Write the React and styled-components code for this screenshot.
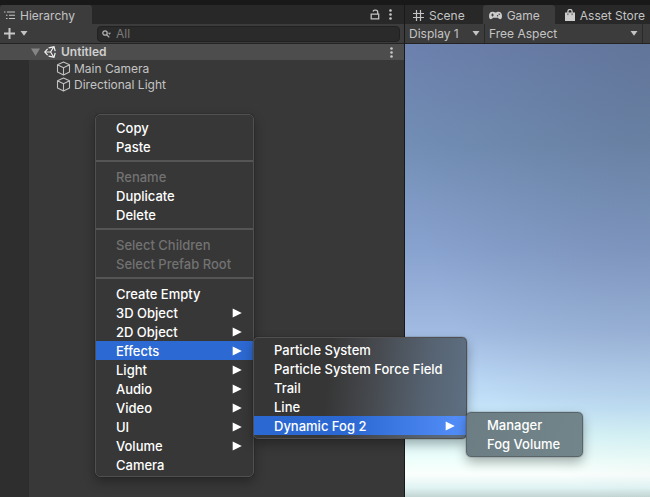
import React from "react";
import styled, { createGlobalStyle, css } from "styled-components";

const Global = createGlobalStyle`
  * { box-sizing: border-box; }
  html, body, #root { height: 100%; }
  body { margin: 0; overflow: hidden; background: #191919; }
  body, button, input, select { font-family: Inter, "Liberation Sans", sans-serif; font-size: 12px; }
  button { border: 0; padding: 0; background: none; color: inherit; }
  ul { list-style: none; margin: 0; padding: 0; }
`;

const Editor = styled.div`
  display: grid;
  grid-template-columns: minmax(0, 404fr) minmax(0, 245fr);
  gap: 1px;
  height: 100%;
  padding-top: 5px;
  background: #191919;
  color: #c4c4c4;
`;

const Panel = styled.section`
  display: flex;
  flex-direction: column;
  min-width: 0;
  background: #383838;
`;

const TabBar = styled.div`
  display: flex;
  align-items: stretch;
  height: 19px;
  background: #282828;
`;

const Tab = styled.button`
  display: flex;
  align-items: center;
  gap: 5px;
  padding: 1px ${(p) => p.$end}px 0 ${(p) => p.$start}px;
  white-space: nowrap;
  border-radius: 3px 3px 0 0;
  background: ${(p) => (p.$active ? "#3c3c3c" : "transparent")};
  svg { flex: none; }
`;

const TabActions = styled.div`
  display: flex;
  align-items: center;
  gap: 9px;
  margin-left: auto;
  padding-right: 12px;
`;

const IconButton = styled.button`
  display: flex;
  align-items: center;
  gap: 5px;
`;

const Toolbar = styled.div`
  display: flex;
  align-items: center;
  height: 20px;
  background: #3c3c3c;
  border-bottom: 1px solid #232323;
`;

const HierarchyTools = styled(Toolbar)`
  gap: 69px;
  padding: 0 4px;
`;

const Search = styled.label`
  display: flex;
  align-items: center;
  gap: 5px;
  flex: 1;
  min-width: 0;
  height: 16px;
  padding-left: 4px;
  border: 1px solid #212121;
  border-radius: 4px;
  background: #2a2a2a;
`;

const SearchInput = styled.input`
  flex: 1;
  min-width: 0;
  padding: 0;
  border: 0;
  outline: 0;
  background: none;
  color: #c4c4c4;
  line-height: 14px;
  &::placeholder { color: #7b7b7b; opacity: 1; }
`;

const SceneRow = styled.div`
  display: flex;
  align-items: center;
  height: 16px;
  padding: 0 11px 0 31px;
  background: #4d4d4d;
  font-weight: 600;
  color: #d0d0d0;
`;

const SceneName = styled.span`
  flex: 1;
  margin-left: 5px;
  line-height: 16px;
`;

const SceneToggle = styled(IconButton)`
  gap: 4px;
`;

const Tree = styled.ul`
  flex: 1;
  border-left: 29px solid #2e2e2e;
`;

const TreeItem = styled.li`
  display: flex;
  align-items: center;
  gap: 3px;
  height: 16px;
  padding-left: 27px;
  white-space: nowrap;
`;

const Dropdown = styled.label`
  display: grid;
  align-items: center;
  flex: ${(p) => p.$flex};
  height: 19px;
  border-right: 1px solid #2a2a2a;
  > * { grid-area: 1 / 1; }
  svg { justify-self: end; margin-right: 4px; pointer-events: none; }
`;

const Select = styled.select`
  appearance: none;
  min-width: 0;
  padding: 0 0 0 4px;
  border: 0;
  background: none;
  color: inherit;
`;

const GameView = styled.div`
  flex: 1;
  background:
    radial-gradient(ellipse at 100% 0, rgba(75, 90, 110, 0.32), transparent 72%),
    linear-gradient(#6c81ae 0%, #728eb5 22%, #88a2cf 45%, #a0bae1 63%, #b4d0f0 72%, #c4e3f9 80%,
      #d8f6fa 86%, #effffb 92%, #fafffd 95%, #e0f3f3 98%, #c2d5d3 100%);
`;

const surfaces = {
  dark: "#373737",
  blend: "linear-gradient(96deg, #363636 35%, #46494e 55%, #55616f 78%, #5f7184 100%)",
  sky: "linear-gradient(100deg, #6c7e84, #72858a)",
};

const MenuList = styled.ul`
  position: absolute;
  width: ${(p) => p.$width}px;
  padding: ${(p) => (p.$nested ? "2px 0 3px" : "3px 0 2px")};
  border: 1px solid ${(p) => (p.$surface === "sky" ? "#59636a" : "#505050")};
  border-radius: 5px;
  background: ${(p) => surfaces[p.$surface]};
  box-shadow: 0 0 1px #111, 0 5px 12px rgba(0, 0, 0, 0.32);
  color: #fff;
  ${(p) =>
    p.$nested
      ? css`left: 100%; top: -4px;`
      : css`left: 95px; top: 114px;`}
`;

const MenuItem = styled.li`
  position: relative;
`;

const MenuButton = styled.button`
  display: flex;
  align-items: center;
  justify-content: space-between;
  width: 100%;
  height: 19px;
  padding: 0 11px 0 20px;
  font-size: 13px;
  font-weight: 500;
  white-space: nowrap;
  color: #fff;
  background: ${(p) =>
    p.$tone === "bright" ? "linear-gradient(90deg, #2c68d2 45%, #548ffa)" : p.$tone ? "#2d69d2" : "none"};
  &:disabled { color: #727272; }
`;

const Divider = styled.li`
  height: 11px;
  padding: 4px 0 5px;
  &::before { content: ""; display: block; height: 2px; background: #555; }
`;

const Caret = () => (
  <svg width="8" height="5" viewBox="0 0 8 5" fill="#c4c4c4"><path d="M.5 0h7L4 4.8z" /></svg>
);
const Arrow = () => (
  <svg width="10" height="10" viewBox="0 0 10 10" fill="#fff"><path d="M.7.6 9.8 5 .7 9.4z" /></svg>
);
const Dots = () => (
  <svg width="3" height="11" viewBox="0 0 3 11" fill="#c8c8c8">
    <circle cx="1.5" cy="1.5" r="1.3" /><circle cx="1.5" cy="5.5" r="1.3" /><circle cx="1.5" cy="9.5" r="1.3" />
  </svg>
);
const ListIcon = () => (
  <svg width="11" height="9" viewBox="0 0 11 9" fill="#c4c4c4">
    <path d="M0 .5h1.5v1H0zM3 .5h8v1H3zM2 3.8h1.5v1H2zM5 3.8h6v1H5zM2 7.1h1.5v1H2zM5 7.1h6v1H5z" />
  </svg>
);
const LockIcon = () => (
  <svg width="10" height="11" viewBox="0 0 10 11" fill="none" stroke="#c4c4c4" strokeWidth="1.3">
    <path d="M1.2 5.2h7.5v4.6H1.2zM7.7 5V3.1a2 2 0 0 0-2-2H4.9A1.9 1.9 0 0 0 3 2.5" />
  </svg>
);
const PlusIcon = () => (
  <svg width="11" height="11" viewBox="0 0 11 11" stroke="#c8c8c8" strokeWidth="2"><path d="M5.5 0v11M0 5.5h11" /></svg>
);
const SearchIcon = () => (
  <svg width="9" height="8" viewBox="0 0 9 8" fill="none" stroke="#b0b0b0" strokeWidth="1.3">
    <circle cx="3" cy="3" r="2.2" /><path d="m4.7 4.7 2.6 2.7" /><path d="M5.9 2.8H9L7.5 4.8z" fill="#b0b0b0" stroke="none" />
  </svg>
);
const FoldIcon = () => (
  <svg width="9" height="8" viewBox="0 0 9 8" fill="#858585"><path d="M0 .5h9L4.5 8z" /></svg>
);
const UnityIcon = () => (
  <svg width="12" height="12" viewBox="0 0 12 12" fill="none" stroke="#f0f0f0" strokeWidth="1.2">
    <path d="M4.6 1.9 10 .8l1.2 4.4M11.2 6.8 10 11.2l-5.4-1.1M3.6 9.2.8 6l2.8-3.2" />
    <path d="M1 6h5.6M6.6 6 9.6 1M6.6 6l3 5" />
  </svg>
);
const CubeIcon = () => (
  <svg width="15" height="15" viewBox="0 0 15 15" fill="none" stroke="#c0c0c0" strokeWidth="1.1" strokeLinejoin="round">
    <path d="m7.5 1 6 2.8v7.3l-6 3-6-3V3.8zM1.5 3.8l6 3 6-3M7.5 6.8v7.3" />
  </svg>
);
const GridIcon = () => (
  <svg width="11" height="11" viewBox="0 0 11 11" stroke="#c4c4c4" strokeWidth="1.2">
    <path d="M3.5 0v11M7.5 0v11M0 3.5h11M0 7.5h11" />
  </svg>
);
const GamepadIcon = () => (
  <svg width="13" height="9" viewBox="0 0 14 9" preserveAspectRatio="none">
    <path fill="#cccccc" d="M3.8.8C5 .8 5.4 1.4 7 1.4S9 .8 10.2.8C12.8.8 14 2.7 14 5c0 3.7-2.7 4-4.2 1.7H4.2C2.7 9 0 8.7 0 5 0 2.7 1.2.8 3.8.8z" />
    <path d="M3.8 2.5v3M2.3 4h3" stroke="#3c3c3c" strokeWidth="1" />
    <circle cx="9.2" cy="4.7" r=".8" fill="#3c3c3c" /><circle cx="11" cy="3.2" r=".8" fill="#3c3c3c" />
  </svg>
);
const BagIcon = () => (
  <svg width="10" height="12" viewBox="0 0 10 12">
    <path fill="#cccccc" d="M0 3.5h10V12H0z" />
    <path d="M2.9 5V2.5a2.1 2.1 0 0 1 4.2 0V5" fill="none" stroke="#cccccc" strokeWidth="1.2" />
    <path d="M2.9 4.3v1.8M7.1 4.3v1.8" stroke="#555" />
  </svg>
);

const menu = {
  width: 159,
  surface: "dark",
  items: [
    { label: "Copy" }, { label: "Paste" }, null,
    { label: "Rename", disabled: true }, { label: "Duplicate" }, { label: "Delete" }, null,
    { label: "Select Children", disabled: true }, { label: "Select Prefab Root", disabled: true }, null,
    { label: "Create Empty" }, { label: "3D Object", more: true }, { label: "2D Object", more: true },
    {
      label: "Effects", more: true, tone: "plain",
      sub: {
        width: 214,
        surface: "blend",
        items: [
          { label: "Particle System" }, { label: "Particle System Force Field" }, { label: "Trail" }, { label: "Line" },
          {
            label: "Dynamic Fog 2", more: true, tone: "bright",
            sub: { width: 117, surface: "sky", items: [{ label: "Manager" }, { label: "Fog Volume" }] },
          },
        ],
      },
    },
    { label: "Light", more: true }, { label: "Audio", more: true }, { label: "Video", more: true },
    { label: "UI", more: true }, { label: "Volume", more: true }, { label: "Camera" },
  ],
};

function Menu({ data, nested }) {
  return (
    <MenuList role="menu" $width={data.width} $surface={data.surface} $nested={nested}>
      {data.items.map((item, i) =>
        item ? (
          <MenuItem key={item.label} role="none">
            <MenuButton role="menuitem" disabled={item.disabled} $tone={item.tone}>
              {item.label}
              {item.more && <Arrow />}
            </MenuButton>
            {item.sub && <Menu data={item.sub} nested />}
          </MenuItem>
        ) : (
          <Divider key={i} role="separator" />
        )
      )}
    </MenuList>
  );
}

export default function App() {
  return (
    <>
      <Global />
      <Editor>
        <Panel>
          <TabBar>
            <Tab $active $start={4} $end={17}><ListIcon />Hierarchy</Tab>
            <TabActions>
              <IconButton aria-label="Lock"><LockIcon /></IconButton>
              <IconButton aria-label="Panel options"><Dots /></IconButton>
            </TabActions>
          </TabBar>
          <HierarchyTools>
            <IconButton aria-label="Create"><PlusIcon /><Caret /></IconButton>
            <Search>
              <SearchIcon />
              <SearchInput type="text" placeholder="All" aria-label="Search hierarchy" />
            </Search>
          </HierarchyTools>
          <SceneRow>
            <SceneToggle aria-label="Collapse Untitled"><FoldIcon /><UnityIcon /></SceneToggle>
            <SceneName>Untitled</SceneName>
            <IconButton aria-label="Scene options"><Dots /></IconButton>
          </SceneRow>
          <Tree>
            <TreeItem><CubeIcon />Main Camera</TreeItem>
            <TreeItem><CubeIcon />Directional Light</TreeItem>
          </Tree>
        </Panel>
        <Panel>
          <TabBar>
            <Tab $start={8} $end={18}><GridIcon />Scene</Tab>
            <Tab $active $start={6} $end={15}><GamepadIcon />Game</Tab>
            <Tab $start={10} $end={5}><BagIcon />Asset Store</Tab>
          </TabBar>
          <Toolbar>
            <Dropdown $flex="0 0 80px">
              <Select aria-label="Display"><option>Display 1</option></Select>
              <Caret />
            </Dropdown>
            <Dropdown $flex="0 1 158px">
              <Select aria-label="Aspect ratio"><option>Free Aspect</option></Select>
              <Caret />
            </Dropdown>
          </Toolbar>
          <GameView />
        </Panel>
      </Editor>
      <Menu data={menu} />
    </>
  );
}
